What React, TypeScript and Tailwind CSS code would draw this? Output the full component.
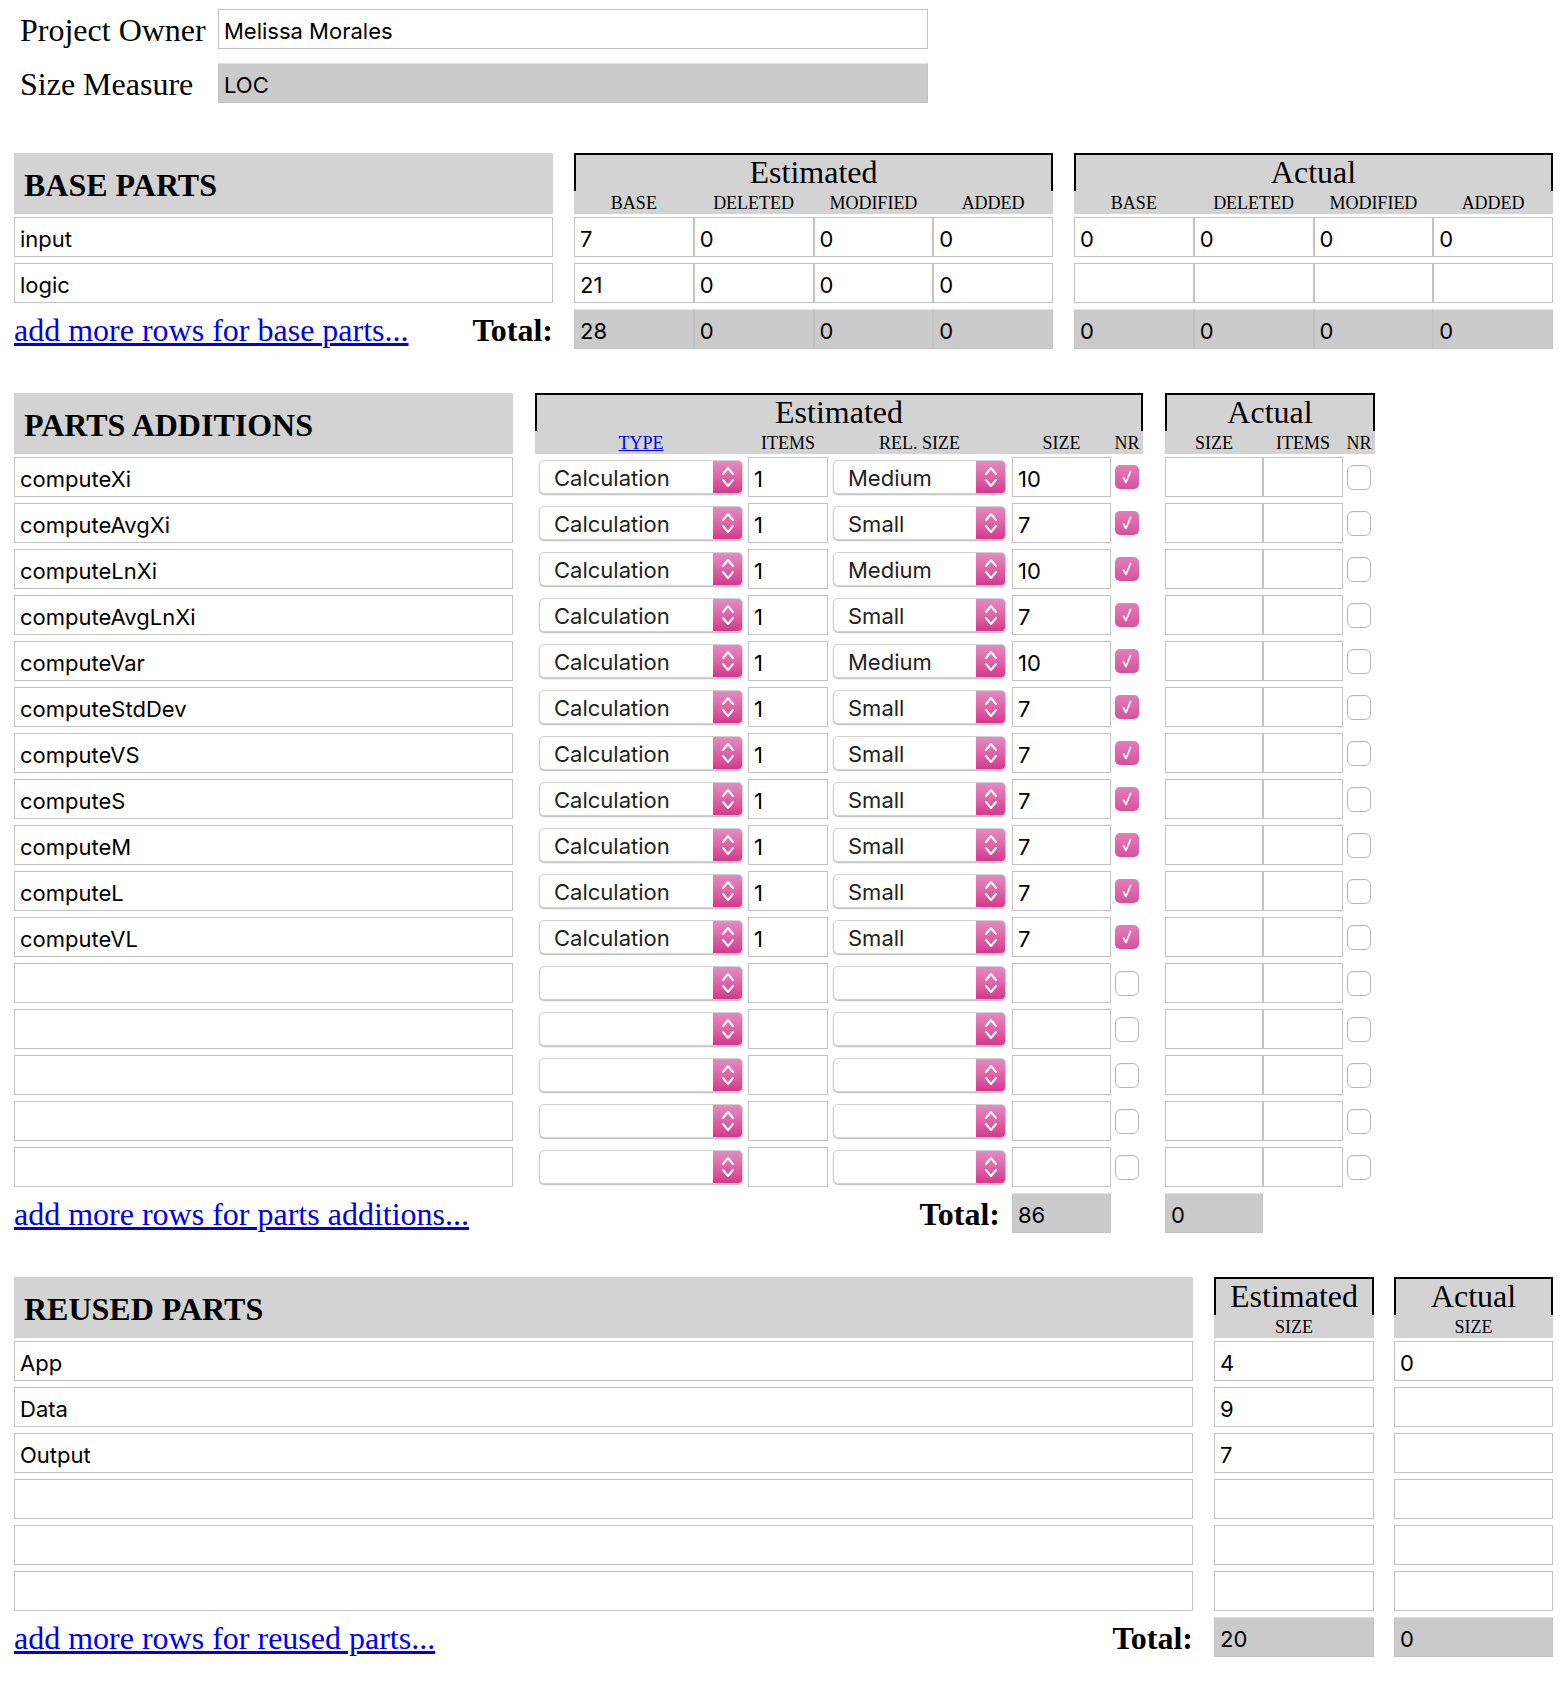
import React from 'react';

const SANS = "font-['Inter',sans-serif]";

type FieldProps = { value?: string; className?: string; gray?: boolean };

const Field = ({ value = '', className = '', gray = false }: FieldProps) => (
  <input
    readOnly
    value={value}
    className={`h-[40px] min-w-0 border border-[#c3c3c3] px-[5px] pt-[3px] text-[22px] text-black outline-none ${SANS} ${
      gray ? 'bg-[#cbcbcb] border-t-[#e2e2e2]' : 'bg-white'
    } ${className}`}
  />
);

const Select = ({ value = '', className = '' }: { value?: string; className?: string }) => (
  <div className="flex h-[40px] items-center">
    <div
      className={`flex h-[34px] items-center overflow-hidden rounded-[5px] border border-[#d2d2d2] bg-white shadow-[0_1px_1.5px_rgba(0,0,0,0.28)] ${className}`}
    >
      <span className={`flex-1 pl-[14px] pt-[2px] text-[22px] text-[#222] ${SANS}`}>{value}</span>
      <span className="flex h-full w-[29px] items-center justify-center bg-linear-to-b from-[#e48ac4] to-[#d4368c]">
        <svg width="16" height="28" viewBox="0 0 16 28">
          <path
            d="M3 11 L8 5 L13 11 M3 17 L8 23 L13 17"
            stroke="white"
            strokeWidth="2"
            fill="none"
            strokeLinecap="round"
            strokeLinejoin="round"
          />
        </svg>
      </span>
    </div>
  </div>
);

const Check = ({ on }: { on: boolean }) =>
  on ? (
    <span className="flex h-[24px] w-[24px] items-center justify-center rounded-[5px] bg-linear-to-b from-[#e47dbb] to-[#d5519c]">
      <svg width="14" height="18" viewBox="0 0 14 18">
        <path
          d="M3.5 10 L6 14.5 L10.5 3.5"
          stroke="white"
          strokeWidth="1.7"
          fill="none"
          strokeLinecap="round"
          strokeLinejoin="round"
        />
      </svg>
    </span>
  ) : (
    <span className="h-[25px] w-[24px] rounded-[6px] border border-[#b8b8b8] bg-white shadow-[inset_0_1px_1px_rgba(0,0,0,0.06)]" />
  );

const GroupHead = ({
  title,
  className = '',
  children,
}: {
  title: string;
  className?: string;
  children: React.ReactNode;
}) => (
  <div className={`flex h-[61px] flex-col bg-[#d3d3d3] ${className}`}>
    <div className="h-[38px] border-x-2 border-t-2 border-black text-center text-[32px] leading-[34px]">
      {title}
    </div>
    <div className="flex h-[23px] items-center text-[18px] leading-none">{children}</div>
  </div>
);

const SectionTitle = ({ text, className }: { text: string; className: string }) => (
  <div className={`flex h-[61px] items-center bg-[#d3d3d3] pl-[10px] pt-[2px] text-[32px] font-bold ${className}`}>
    {text}
  </div>
);

const MoreLink = ({ text }: { text: string }) => (
  <a href="#" className="text-[32px] leading-none text-[#0000ee] underline">
    {text}
  </a>
);

const baseRows = [
  { name: 'input', est: ['7', '0', '0', '0'], act: ['0', '0', '0', '0'] },
  { name: 'logic', est: ['21', '0', '0', '0'], act: ['', '', '', ''] },
];

const addRows = [
  ['computeXi', 'Medium', '10'],
  ['computeAvgXi', 'Small', '7'],
  ['computeLnXi', 'Medium', '10'],
  ['computeAvgLnXi', 'Small', '7'],
  ['computeVar', 'Medium', '10'],
  ['computeStdDev', 'Small', '7'],
  ['computeVS', 'Small', '7'],
  ['computeS', 'Small', '7'],
  ['computeM', 'Small', '7'],
  ['computeL', 'Small', '7'],
  ['computeVL', 'Small', '7'],
];

const reused = [
  ['App', '4', '0'],
  ['Data', '9', ''],
  ['Output', '7', ''],
  ['', '', ''],
  ['', '', ''],
  ['', '', ''],
];

const baseCols = ['BASE', 'DELETED', 'MODIFIED', 'ADDED'];

export default function App() {
  const emptyAdds = Array.from({ length: 5 }, (_, i) => i);

  return (
    <div className="min-h-[1688px] w-[1564px] bg-white pl-[14px] pt-[9px] font-['Liberation_Serif',serif] text-black">
      {/* owner / measure */}
      <div className="flex flex-col gap-[14px]">
        <div className="flex items-center">
          <span className="w-[204px] pl-[6px] pt-[2px] text-[32px] leading-none">Project Owner</span>
          <Field value="Melissa Morales" className="w-[710px]" />
        </div>
        <div className="flex items-center">
          <span className="w-[204px] pl-[6px] pt-[2px] text-[32px] leading-none">Size Measure</span>
          <Field value="LOC" gray className="w-[710px]" />
        </div>
      </div>

      {/* base parts */}
      <div className="mt-[50px] flex flex-col">
        <div className="flex gap-[21px]">
          <SectionTitle text="BASE PARTS" className="w-[539px]" />
          {['Estimated', 'Actual'].map((t) => (
            <GroupHead key={t} title={t} className="w-[479px]">
              {baseCols.map((c) => (
                <span key={c} className="flex-1 text-center">
                  {c}
                </span>
              ))}
            </GroupHead>
          ))}
        </div>
        <div className="mt-[3px] flex flex-col gap-[6px]">
          {baseRows.map((r) => (
            <div key={r.name} className="flex gap-[21px]">
              <Field value={r.name} className="w-[539px]" />
              <div className="flex w-[479px]">
                {r.est.map((v, i) => (
                  <Field key={i} value={v} className="flex-1" />
                ))}
              </div>
              <div className="flex w-[479px]">
                {r.act.map((v, i) => (
                  <Field key={i} value={v} className="flex-1" />
                ))}
              </div>
            </div>
          ))}
          <div className="flex gap-[21px]">
            <div className="flex w-[539px] items-center justify-between pt-[2px]">
              <MoreLink text="add more rows for base parts..." />
              <span className="text-[32px] font-bold leading-none">Total:</span>
            </div>
            <div className="flex w-[479px]">
              {['28', '0', '0', '0'].map((v, i) => (
                <Field key={i} value={v} gray className="flex-1" />
              ))}
            </div>
            <div className="flex w-[479px]">
              {['0', '0', '0', '0'].map((v, i) => (
                <Field key={i} value={v} gray className="flex-1" />
              ))}
            </div>
          </div>
        </div>
      </div>

      {/* parts additions */}
      <div className="mt-[44px] flex flex-col">
        <div className="flex gap-[22px]">
          <SectionTitle text="PARTS ADDITIONS" className="w-[499px]" />
          <GroupHead title="Estimated" className="w-[608px]">
            <span className="ml-[4px] w-[204px] text-center">
              <a href="#" className="text-[#0000ee] underline">
                TYPE
              </a>
            </span>
            <span className="ml-[5px] w-[80px] text-center">ITEMS</span>
            <span className="ml-[5px] w-[173px] text-center">REL. SIZE</span>
            <span className="ml-[6px] w-[99px] text-center">SIZE</span>
            <span className="flex-1 text-center">NR</span>
          </GroupHead>
          <GroupHead title="Actual" className="w-[210px]">
            <span className="w-[98px] text-center">SIZE</span>
            <span className="w-[80px] text-center">ITEMS</span>
            <span className="flex-1 text-center">NR</span>
          </GroupHead>
        </div>
        <div className="mt-[3px] flex flex-col gap-[6px]">
          {addRows.map(([name, rel, size]) => (
            <div key={name} className="flex gap-[22px]">
              <Field value={name} className="w-[499px]" />
              <div className="flex w-[608px] items-center pl-[4px]">
                <Select value="Calculation" className="w-[204px]" />
                <Field value="1" className="ml-[5px] w-[80px]" />
                <div className="ml-[5px]">
                  <Select value={rel} className="w-[173px]" />
                </div>
                <Field value={size} className="ml-[6px] w-[99px]" />
                <div className="flex flex-1 justify-center">
                  <Check on />
                </div>
              </div>
              <div className="flex w-[210px] items-center">
                <Field className="w-[98px]" />
                <Field className="w-[80px]" />
                <div className="flex flex-1 justify-center">
                  <Check on={false} />
                </div>
              </div>
            </div>
          ))}
          {emptyAdds.map((i) => (
            <div key={i} className="flex gap-[22px]">
              <Field className="w-[499px]" />
              <div className="flex w-[608px] items-center pl-[4px]">
                <Select className="w-[204px]" />
                <Field className="ml-[5px] w-[80px]" />
                <div className="ml-[5px]">
                  <Select className="w-[173px]" />
                </div>
                <Field className="ml-[6px] w-[99px]" />
                <div className="flex flex-1 justify-center">
                  <Check on={false} />
                </div>
              </div>
              <div className="flex w-[210px] items-center">
                <Field className="w-[98px]" />
                <Field className="w-[80px]" />
                <div className="flex flex-1 justify-center">
                  <Check on={false} />
                </div>
              </div>
            </div>
          ))}
          <div className="flex gap-[22px]">
            <div className="flex w-[499px] items-center pt-[2px]">
              <MoreLink text="add more rows for parts additions..." />
            </div>
            <div className="flex w-[608px] items-center">
              <span className="w-[477px] pr-[12px] pt-[2px] text-right text-[32px] font-bold leading-none">Total:</span>
              <Field value="86" gray className="w-[99px]" />
            </div>
            <div className="flex w-[210px]">
              <Field value="0" gray className="w-[98px]" />
            </div>
          </div>
        </div>
      </div>

      {/* reused parts */}
      <div className="mt-[44px] flex flex-col">
        <div className="flex gap-[21px]">
          <SectionTitle text="REUSED PARTS" className="w-[1179px]" />
          <GroupHead title="Estimated" className="w-[160px]">
            <span className="flex-1 text-center">SIZE</span>
          </GroupHead>
          <GroupHead title="Actual" className="ml-[-1px] w-[159px]">
            <span className="flex-1 text-center">SIZE</span>
          </GroupHead>
        </div>
        <div className="mt-[3px] flex flex-col gap-[6px]">
          {reused.map(([name, est, act], i) => (
            <div key={i} className="flex gap-[21px]">
              <Field value={name} className="w-[1179px]" />
              <Field value={est} className="w-[160px]" />
              <Field value={act} className="ml-[-1px] w-[159px]" />
            </div>
          ))}
          <div className="flex gap-[21px]">
            <div className="flex w-[1179px] items-center justify-between pt-[2px]">
              <MoreLink text="add more rows for reused parts..." />
              <span className="text-[32px] font-bold leading-none">Total:</span>
            </div>
            <Field value="20" gray className="w-[160px]" />
            <Field value="0" gray className="ml-[-1px] w-[159px]" />
          </div>
        </div>
      </div>
    </div>
  );
}
